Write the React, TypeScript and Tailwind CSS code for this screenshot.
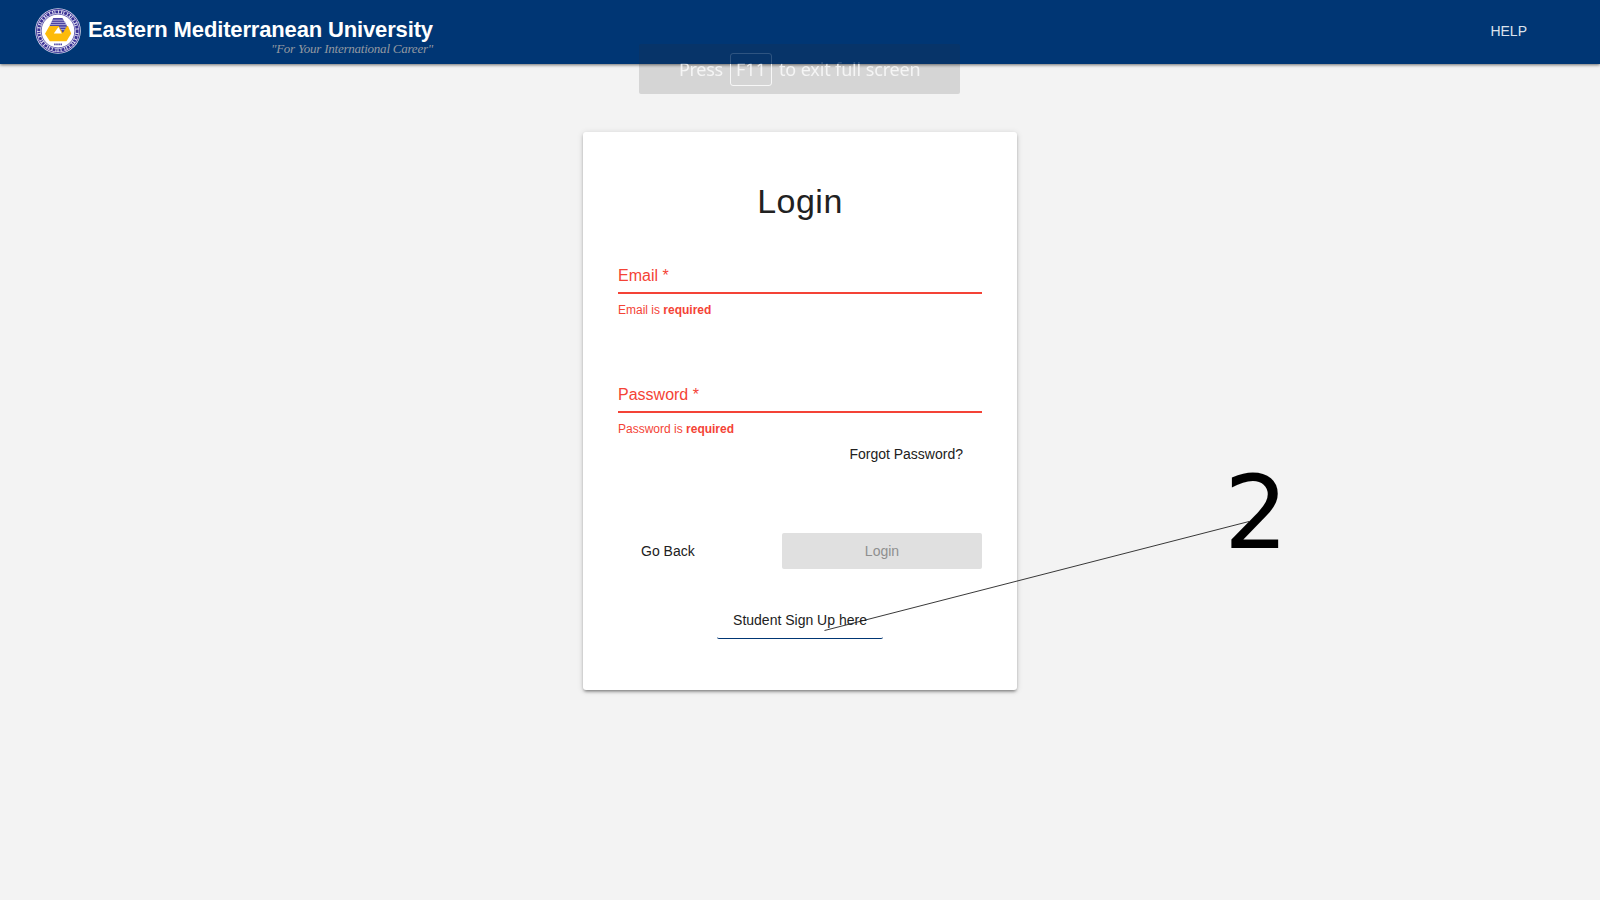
import React from "react";

function Crest() {
  return (
    <svg viewBox="0 0 46 46" className="mb-[2px] h-[46px] w-[46px] shrink-0">
      <circle cx="23" cy="23" r="22.8" fill="#dcdcee" />
      <circle cx="23" cy="23" r="21.6" fill="none" stroke="#4a41a0" strokeWidth="1" />
      <circle cx="23" cy="23" r="19.2" fill="none" stroke="#3a3196" strokeWidth="2.8" strokeDasharray="2.1 1.1 1.2 0.9 2.8 1" />
      <circle cx="23" cy="23" r="16.8" fill="none" stroke="#5a52aa" strokeWidth="0.9" />
      <circle cx="23" cy="23" r="16.2" fill="#ffffff" />
      <path d="M14.4 18H33L36.2 25.5 31.5 33.2H14.8L10 25.8Z" fill="#fdbb0b" />
      <path d="M18.3 10H27.4L32 18 27.8 25 23.8 18H14.6Z" fill="#4b43a2" />
      <path d="M17 12.2H29M15.8 14.4H31M14.6 16.6H32M24.5 19.2H31.2M26 21.6H29.8" stroke="#c4c1e2" strokeWidth="0.8" />
      <path d="M23.4 19 26.8 25.6H18.8Z" fill="#ffffff" />
      <path d="M19.2 36.3H27.2" stroke="#3a3196" strokeWidth="1.8" strokeDasharray="1.4 0.7" />
    </svg>
  );
}

function Header() {
  return (
    <header className="flex h-16 items-center justify-between bg-[#003674] pl-[35px] pr-[73px] shadow-[0_1px_3px_rgba(0,0,0,0.55)]">
      <div className="flex items-center">
        <Crest />
        <div className="ml-[7px] flex w-[346px] flex-col pt-[8px]">
          <span className="whitespace-nowrap text-[22px] font-bold leading-[25px] tracking-[-0.15px] text-white">
            Eastern Mediterranean University
          </span>
          <span className="whitespace-nowrap pr-[1px] text-right font-['Liberation_Serif',serif] text-[13px] italic leading-[14px] tracking-[-0.23px] text-[#9399a1]">
            "For Your International Career"
          </span>
        </div>
      </div>
      <a className="mb-[2px] text-[14px] leading-5 text-[#dbe3ec]">HELP</a>
    </header>
  );
}

function Field({ label }: { label: string }) {
  return (
    <div className="text-[#f44336]">
      <div className="box-content h-[26px] border-b-2 border-[#f44336] pt-[1px] text-[16px] leading-[20px]">{label} *</div>
      <div className="mt-[9px] text-[12px] leading-[14px]">
        {label} is <strong>required</strong>
      </div>
    </div>
  );
}

function LoginCard() {
  return (
    <main className="mx-auto mt-[68px] flex h-[558px] w-[434px] flex-col rounded-[3px] bg-white px-[35px] shadow-[0_3px_3px_-2px_rgba(0,0,0,0.3),0_2px_3px_0_rgba(0,0,0,0.18),0_1px_6px_0_rgba(0,0,0,0.14)]">
      <h1 className="mt-[49px] text-center text-[34px] leading-10 tracking-[0.5px]">Login</h1>
      <div className="mt-[44px]">
        <Field label="Email" />
      </div>
      <div className="mt-[67px]">
        <Field label="Password" />
      </div>
      <div className="mt-[8px] flex justify-end pr-[19px]">
        <a className="text-[14px] leading-5">Forgot Password?</a>
      </div>
      <div className="mt-[69px] flex items-center justify-between">
        <button className="h-9 pl-[23px] text-[14px]">Go Back</button>
        <button className="h-9 w-[200px] rounded-[2px] bg-[#e0e0e0] text-[14px] text-[#8f8f8f]">Login</button>
      </div>
      <div className="mt-[34px] flex justify-center">
        <button className="h-9 w-[166px] rounded-[2px] border-b border-[#003674] text-[14px]">Student Sign Up here</button>
      </div>
    </main>
  );
}

function FullScreenNotice() {
  return (
    <div className="absolute left-[639px] top-[44px] h-[50px] w-[321px] rounded-[2px] bg-[#303030]/[0.15]">
      <div className="flex h-full items-center justify-center font-['Noto_Sans',sans-serif] text-[18px] text-white/75 [mask-image:linear-gradient(to_bottom,rgba(0,0,0,0.2)_20px,black_20px)]">
        <span className="w-[44px] whitespace-nowrap tracking-[-0.3px]">Press</span>
        <span className="ml-[7px] flex h-[33px] w-[42px] items-center justify-center rounded-[3px] border border-white/80">F11</span>
        <span className="ml-[7px] w-[141px] whitespace-nowrap tracking-[-0.14px]">to exit full screen</span>
      </div>
    </div>
  );
}

function Callout() {
  return (
    <div className="pointer-events-none absolute inset-0">
      <svg className="absolute inset-0 h-full w-full" viewBox="0 0 1600 900">
        <line x1="824.5" y1="630.5" x2="1249" y2="521.5" stroke="#222222" strokeWidth="0.9" />
      </svg>
      <span className="absolute left-[1224px] top-[462px] font-['DejaVu_Sans',sans-serif] text-[101px] leading-[102px] text-black">2</span>
    </div>
  );
}

export default function App() {
  return (
    <div className="relative h-[900px] w-[1600px] overflow-hidden bg-[#f3f3f3] font-['Liberation_Sans',Arial,sans-serif] text-[#212121]">
      <Header />
      <LoginCard />
      <FullScreenNotice />
      <Callout />
    </div>
  );
}
